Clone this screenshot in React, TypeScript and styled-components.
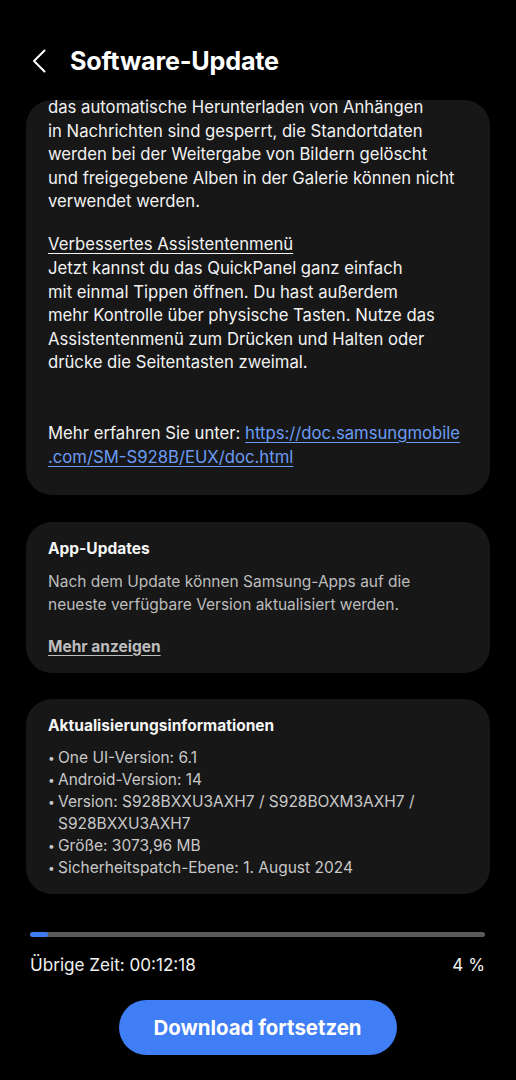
import React from "react";
import styled, { createGlobalStyle } from "styled-components";

const GlobalStyle = createGlobalStyle`
  html, body {
    margin: 0;
    padding: 0;
    background: #000000;
  }
  body {
    font-family: Inter, "Noto Sans", "Liberation Sans", sans-serif;
    color: #f2f2f2;
    -webkit-font-smoothing: antialiased;
  }
`;

const Screen = styled.div`
  width: 516px;
  height: 1080px;
  background: #000000;
  display: flex;
  flex-direction: column;
  overflow: hidden;
`;

const Header = styled.div`
  height: 100px;
  display: flex;
  align-items: center;
  padding: 22px 0 0 30px;
  gap: 22px;
  box-sizing: border-box;
`;

const BackButton = styled.button`
  background: none;
  border: none;
  padding: 0;
  width: 18px;
  height: 26px;
  display: flex;
  align-items: center;
  justify-content: center;
  cursor: pointer;
`;

const Title = styled.h1`
  margin: 0;
  font-size: 25.2px;
  font-weight: 700;
  color: #ffffff;
  letter-spacing: -0.2px;
`;

const Content = styled.div`
  display: flex;
  flex-direction: column;
  gap: 26.5px;
  padding: 0 26px;
`;

const Card = styled.div<{ $clipped?: boolean }>`
  background: #171717;
  border-radius: 26px;
  padding: ${(p) => (p.$clipped ? "0 22px 26px" : "16px 22px 15px")};
`;

const BodyText = styled.div<{ $offset?: number }>`
  font-size: 16.7px;
  line-height: 23.6px;
  color: #f2f2f2;
  margin-top: ${(p) => p.$offset ?? 0}px;
`;

const Spacer = styled.div<{ $lines: number }>`
  height: ${(p) => p.$lines * 23.6}px;
`;

const Underlined = styled.span`
  text-decoration: underline;
  text-underline-offset: 3px;
`;

const Link = styled.a`
  color: #6b9cf5;
  text-decoration: underline;
  text-underline-offset: 3px;
`;

const CardTitle = styled.div`
  font-size: 15.5px;
  font-weight: 700;
  color: #f5f5f5;
  line-height: 22px;
  margin-bottom: 10px;
`;

const CardDesc = styled.div`
  font-size: 15.5px;
  line-height: 23px;
  color: #bdbdbd;
`;

const MoreLink = styled.div`
  margin-top: 20px;
  font-size: 15.5px;
  font-weight: 700;
  color: #bdbdbd;
  text-decoration: underline;
  text-underline-offset: 3px;
  line-height: 22px;
`;

const InfoList = styled.ul`
  list-style: none;
  margin: 0;
  padding: 0;
  font-size: 15.5px;
  line-height: 22px;
  color: #c8c8c8;
`;

const InfoItem = styled.li`
  display: flex;
  gap: 4px;

  &::before {
    content: "•";
    width: 6px;
    flex-shrink: 0;
    font-size: 12px;
  }
`;

const Footer = styled.div`
  margin-top: auto;
  padding: 0 31px 25px 30px;
  display: flex;
  flex-direction: column;
`;

const Track = styled.div`
  height: 5px;
  border-radius: 3px;
  background: #5b5b5b;
  overflow: hidden;
`;

const Fill = styled.div`
  height: 100%;
  background: #3e7cf1;
  border-radius: 3px;
`;

const StatusRow = styled.div`
  margin-top: 17px;
  display: flex;
  justify-content: space-between;
  font-size: 17.1px;
  line-height: 22px;
  color: #f2f2f2;
`;

const PrimaryButton = styled.button`
  margin: 24px auto 0;
  width: 278px;
  height: 55px;
  border: none;
  border-radius: 28px;
  background: #3f7ef4;
  color: #ffffff;
  font-family: Inter, "Noto Sans", "Liberation Sans", sans-serif;
  font-size: 20.4px;
  font-weight: 700;
  cursor: pointer;
`;

const infoItems = [
  "One UI-Version: 6.1",
  "Android-Version: 14",
  "Version: S928BXXU3AXH7 / S928BOXM3AXH7 / S928BXXU3AXH7",
  "Größe: 3073,96 MB",
  "Sicherheitspatch-Ebene: 1. August 2024",
];

const progress = 4;

export default function App() {
  return (
    <Screen>
      <GlobalStyle />
      <Header>
        <BackButton aria-label="Zurück">
          <svg width="14" height="24" viewBox="0 0 14 24" fill="none">
            <path d="M12.5 1.5 L2 12 L12.5 22.5" stroke="#ffffff" strokeWidth="2" strokeLinecap="round" strokeLinejoin="round" />
          </svg>
        </BackButton>
        <Title>Software-Update</Title>
      </Header>

      <Content>
        <Card $clipped>
          <BodyText $offset={-4}>
            das automatische Herunterladen von Anhängen
            <br />
            in Nachrichten sind gesperrt, die Standortdaten
            <br />
            werden bei der Weitergabe von Bildern gelöscht
            <br />
            und freigegebene Alben in der Galerie können nicht
            <br />
            verwendet werden.
          </BodyText>
          <Spacer $lines={0.82} />
          <BodyText>
            <Underlined>Verbessertes Assistentenmenü</Underlined>
            <br />
            Jetzt kannst du das QuickPanel ganz einfach
            <br />
            mit einmal Tippen öffnen. Du hast außerdem
            <br />
            mehr Kontrolle über physische Tasten. Nutze das
            <br />
            Assistentenmenü zum Drücken und Halten oder
            <br />
            drücke die Seitentasten zweimal.
          </BodyText>
          <Spacer $lines={2} />
          <BodyText>
            Mehr erfahren Sie unter:{" "}
            <Link href="#">
              https://doc.samsungmobile
              <br />
              .com/SM-S928B/EUX/doc.html
            </Link>
          </BodyText>
        </Card>

        <Card>
          <CardTitle>App-Updates</CardTitle>
          <CardDesc>
            Nach dem Update können Samsung-Apps auf die
            <br />
            neueste verfügbare Version aktualisiert werden.
          </CardDesc>
          <MoreLink>Mehr anzeigen</MoreLink>
        </Card>

        <Card>
          <CardTitle>Aktualisierungsinformationen</CardTitle>
          <InfoList>
            {infoItems.map((item) => (
              <InfoItem key={item}>
                <span>{item}</span>
              </InfoItem>
            ))}
          </InfoList>
        </Card>
      </Content>

      <Footer>
        <Track>
          <Fill style={{ width: `${progress}%` }} />
        </Track>
        <StatusRow>
          <span>Übrige Zeit: 00:12:18</span>
          <span>{progress} %</span>
        </StatusRow>
        <PrimaryButton>Download fortsetzen</PrimaryButton>
      </Footer>
    </Screen>
  );
}
